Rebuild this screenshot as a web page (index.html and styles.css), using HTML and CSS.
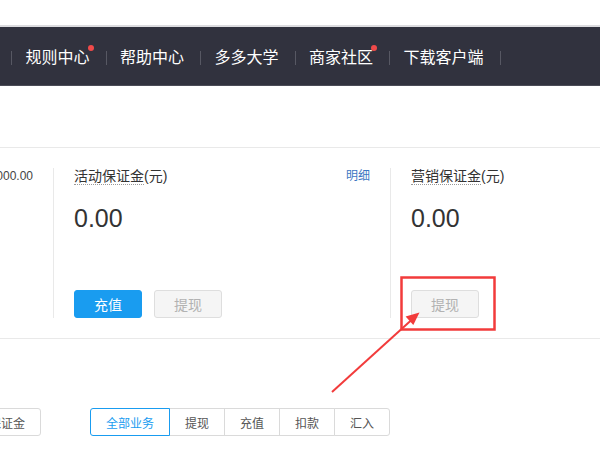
FILE: index.html
```html
<!DOCTYPE html>
<html lang="zh-CN">
<head>
    <meta charset="UTF-8">
    <meta name="viewport" content="width=device-width, initial-scale=1.0">
    <title>保证金</title>
    <link rel="stylesheet" href="styles.css">
</head>
<body>
    <header class="site-header">
        <nav class="nav">
            <ul class="nav-list">
                <li class="nav-item">规则中心<span class="dot"></span></li>
                <li class="nav-item">帮助中心</li>
                <li class="nav-item">多多大学</li>
                <li class="nav-item">商家社区<span class="dot"></span></li>
                <li class="nav-item">下载客户端</li>
            </ul>
        </nav>
    </header>

    <section class="cards">
        <div class="card">
            <div class="card-head right">
                <span class="balance">1000.00</span>
            </div>
        </div>
        <div class="card">
            <div class="card-head">
                <span class="card-title"><span class="tip">活动保证金</span>(元)</span>
                <a class="detail">明细</a>
            </div>
            <div class="amount">0.00</div>
            <div class="actions">
                <button class="btn btn-primary">充值</button>
                <button class="btn" disabled>提现</button>
            </div>
        </div>
        <div class="card">
            <div class="card-head">
                <span class="card-title"><span class="tip">营销保证金</span>(元)</span>
            </div>
            <div class="amount">0.00</div>
            <div class="actions">
                <button class="btn" disabled>提现</button>
            </div>
        </div>
    </section>

    <div class="filters">
        <button class="chip">保证金</button>
        <div class="chip-group">
            <button class="chip active">全部业务</button>
            <button class="chip">提现</button>
            <button class="chip">充值</button>
            <button class="chip">扣款</button>
            <button class="chip">汇入</button>
        </div>
    </div>

    <!-- annotation drawn over the screenshot -->
    <svg class="mark" width="600" height="449" viewBox="0 0 600 449">
        <rect x="401.5" y="277.5" width="93" height="52" fill="none" stroke="#f23b3b" stroke-width="2.5"/>
        <line x1="332" y1="392" x2="412" y2="319.5" stroke="#f23b3b" stroke-width="2"/>
        <polygon points="419.5,312.5 413.3,325 405.6,316.6" fill="#f23b3b"/>
    </svg>
</body>
</html>
```

FILE: styles.css
```css
* {
    margin: 0;
    padding: 0;
    box-sizing: border-box;
}
body {
    position: relative;
    width: 600px;
    height: 449px;
    overflow: hidden;
    background-color: #fff;
    color: #333;
    font-family: "Liberation Sans", "Noto Sans CJK SC", sans-serif;
}
.site-header {
    padding-top: 25px;
}
.nav {
    height: 61px;
    background-color: #31323e;
    border-top: 2px solid #dcdcdf;
    border-bottom: 1px solid #4b4c57;
    display: flex;
    align-items: center;
    padding-top: 4px;
}
.nav-list {
    list-style: none;
    display: flex;
    align-items: center;
    padding-left: 11px;
}
.nav-item {
    position: relative;
    color: #fff;
    font-size: 16px;
    line-height: 14px;
    padding: 0 16px 0 13.5px;
    border-left: 1px solid #575863;
}
.nav-item:last-child {
    border-right: 1px solid #575863;
}
.dot {
    position: absolute;
    top: -6px;
    right: 12px;
    width: 6px;
    height: 6px;
    border-radius: 50%;
    background-color: #f04a4a;
}
.cards {
    display: flex;
    margin: 61px 0 0 -284px;
    padding: 20px 0;
    border-top: 1px solid #e9e9e9;
    border-bottom: 1px solid #e9e9e9;
}
.card {
    flex: 0 0 337px;
    height: 150px;
    padding: 0 20px;
    display: flex;
    flex-direction: column;
    border-left: 1px solid #e9e9e9;
}
.card:first-child {
    border-left: none;
}
.card-head {
    display: flex;
    justify-content: space-between;
    align-items: center;
    line-height: 16px;
}
.card-head.right {
    justify-content: flex-end;
}
.balance {
    font-size: 12px;
    color: #444;
}
.card-title {
    font-size: 14px;
    color: #333;
}
.tip {
    border-bottom: 1px dotted #999;
}
.detail {
    font-size: 12px;
    color: #3b76c2;
    cursor: pointer;
}
.amount {
    margin-top: 22px;
    font-size: 25px;
    line-height: 24px;
    color: #333;
}
.actions {
    margin-top: auto;
    display: flex;
    gap: 12px;
}
.btn {
    width: 68px;
    height: 28px;
    font-family: inherit;
    font-size: 14px;
    color: #b2b2b2;
    background-color: #f5f5f5;
    border: 1px solid #dedede;
    border-radius: 3px;
}
.btn-primary {
    color: #fff;
    background-color: #199cf0;
    border-color: #199cf0;
}
.filters {
    display: flex;
    gap: 49px;
    margin: 69px 0 0 -27px;
}
.chip-group {
    display: flex;
}
.chip {
    position: relative;
    height: 28px;
    padding: 0 15px;
    font-family: inherit;
    font-size: 12px;
    color: #555;
    background-color: #fff;
    border: 1px solid #dadada;
    border-radius: 3px;
}
.chip-group .chip {
    border-radius: 0;
    margin-left: -1px;
}
.chip-group .chip:first-child {
    margin-left: 0;
    border-radius: 3px 0 0 3px;
}
.chip-group .chip:last-child {
    border-radius: 0 3px 3px 0;
}
.chip.active {
    z-index: 1;
    color: #199cf0;
    border-color: #199cf0;
}
.mark {
    position: absolute;
    top: 0;
    left: 0;
    pointer-events: none;
}
```
